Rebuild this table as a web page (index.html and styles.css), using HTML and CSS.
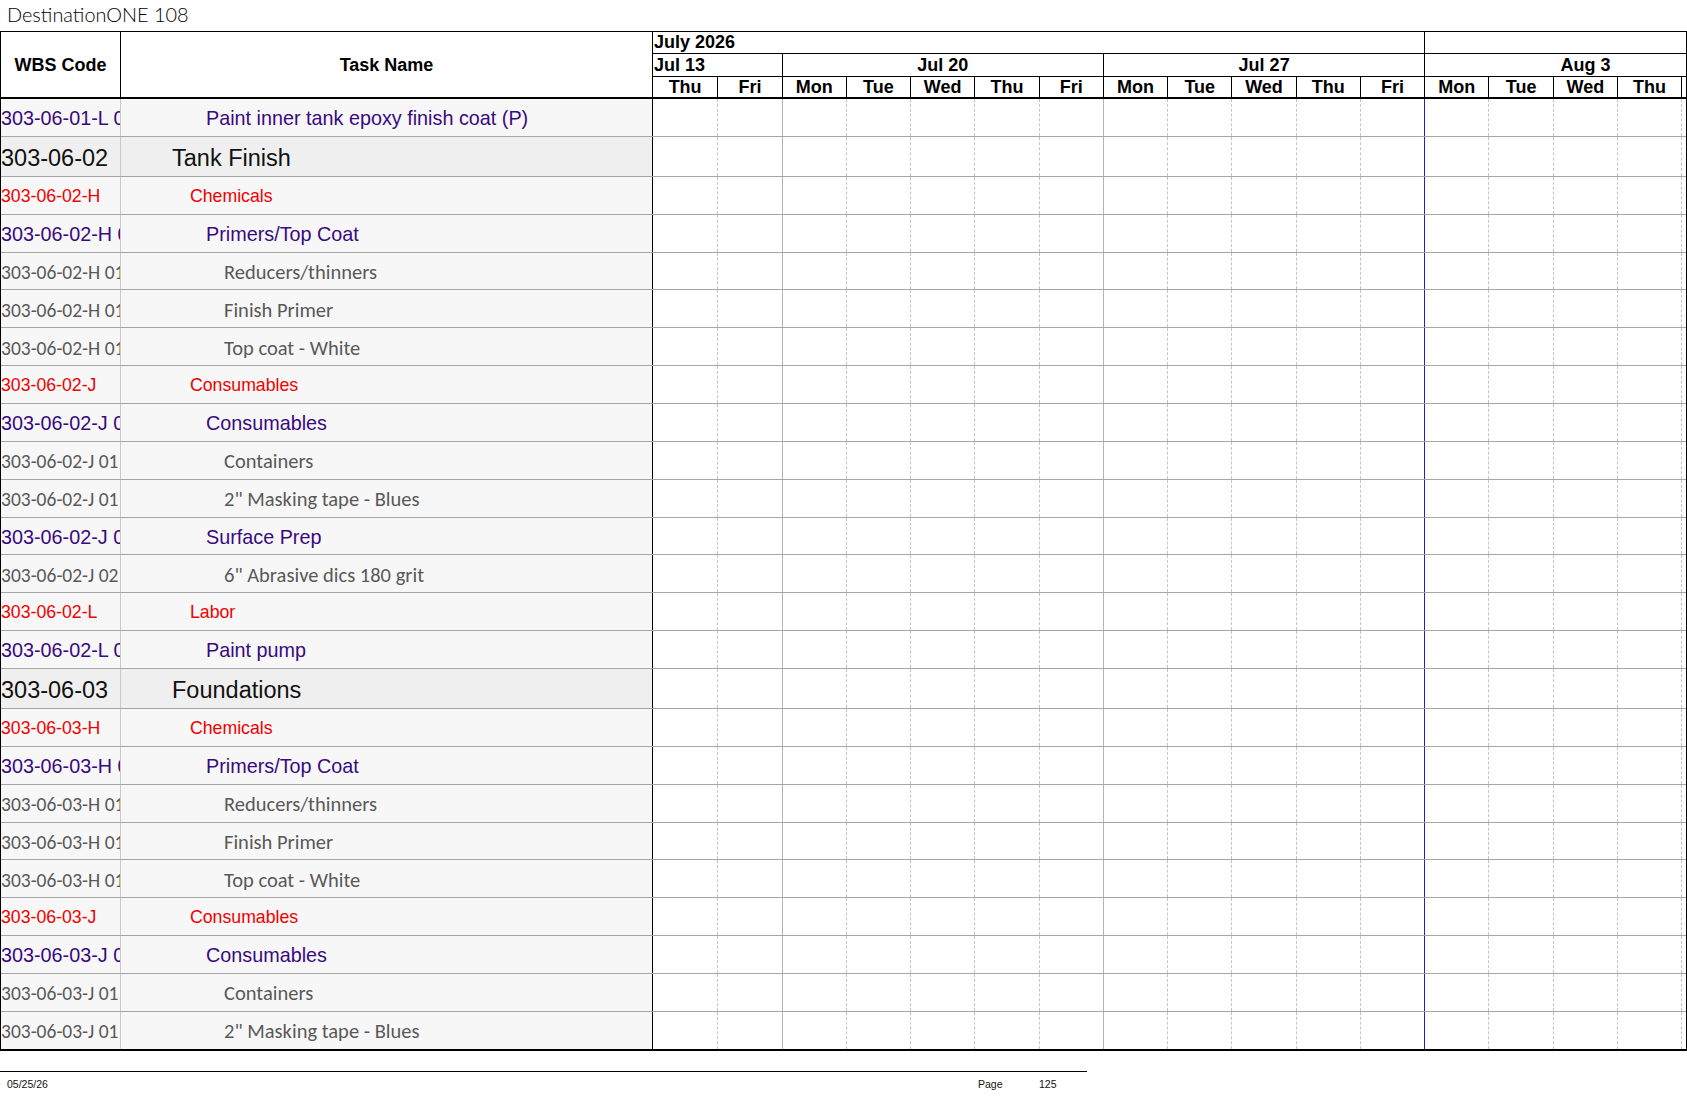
FILE: index.html
```html
<!DOCTYPE html>
<html>
<head>
<meta charset="utf-8">
<title>DestinationONE 108</title>
<link rel="stylesheet" href="styles.css">
</head>
<body>
<div class="title">DestinationONE 108</div>
<div class="sheet">
  <div class="head">
    <div class="h-wbs">WBS Code</div>
    <div class="h-task">Task Name</div>
    <div class="h-chart">
      <div class="mrow"><div class="m1">July 2026</div><div class="m2"></div></div>
      <div class="wrow"><div class="w2d left">Jul 13</div><div class="w5d">Jul 20</div><div class="w5d">Jul 27</div><div class="w5d">Aug 3</div></div>
      <div class="drow"><div>Thu</div><div>Fri</div><div>Mon</div><div>Tue</div><div>Wed</div><div>Thu</div><div>Fri</div><div>Mon</div><div>Tue</div><div>Wed</div><div>Thu</div><div>Fri</div><div>Mon</div><div>Tue</div><div>Wed</div><div>Thu</div><div>Fri</div></div>
    </div>
  </div>
  <div class="rows">
    <div class="row pur"><div class="wbs">303-06-01-L 01</div><div class="task">Paint inner tank epoxy finish coat (P)</div><div class="lane"><i></i><i></i><i></i><i></i><i></i><i></i><i></i><i></i><i></i><i></i><i></i><i></i><i></i><i></i><i></i><i></i><i></i></div></div>
    <div class="row sec"><div class="wbs">303-06-02</div><div class="task">Tank Finish</div><div class="lane"><i></i><i></i><i></i><i></i><i></i><i></i><i></i><i></i><i></i><i></i><i></i><i></i><i></i><i></i><i></i><i></i><i></i></div></div>
    <div class="row red"><div class="wbs">303-06-02-H</div><div class="task">Chemicals</div><div class="lane"><i></i><i></i><i></i><i></i><i></i><i></i><i></i><i></i><i></i><i></i><i></i><i></i><i></i><i></i><i></i><i></i><i></i></div></div>
    <div class="row pur"><div class="wbs">303-06-02-H 01</div><div class="task">Primers/Top Coat</div><div class="lane"><i></i><i></i><i></i><i></i><i></i><i></i><i></i><i></i><i></i><i></i><i></i><i></i><i></i><i></i><i></i><i></i><i></i></div></div>
    <div class="row gry"><div class="wbs">303-06-02-H 01 01</div><div class="task">Reducers/thinners</div><div class="lane"><i></i><i></i><i></i><i></i><i></i><i></i><i></i><i></i><i></i><i></i><i></i><i></i><i></i><i></i><i></i><i></i><i></i></div></div>
    <div class="row gry"><div class="wbs">303-06-02-H 01 02</div><div class="task">Finish Primer</div><div class="lane"><i></i><i></i><i></i><i></i><i></i><i></i><i></i><i></i><i></i><i></i><i></i><i></i><i></i><i></i><i></i><i></i><i></i></div></div>
    <div class="row gry"><div class="wbs">303-06-02-H 01 03</div><div class="task">Top coat - White</div><div class="lane"><i></i><i></i><i></i><i></i><i></i><i></i><i></i><i></i><i></i><i></i><i></i><i></i><i></i><i></i><i></i><i></i><i></i></div></div>
    <div class="row red"><div class="wbs">303-06-02-J</div><div class="task">Consumables</div><div class="lane"><i></i><i></i><i></i><i></i><i></i><i></i><i></i><i></i><i></i><i></i><i></i><i></i><i></i><i></i><i></i><i></i><i></i></div></div>
    <div class="row pur"><div class="wbs">303-06-02-J 01</div><div class="task">Consumables</div><div class="lane"><i></i><i></i><i></i><i></i><i></i><i></i><i></i><i></i><i></i><i></i><i></i><i></i><i></i><i></i><i></i><i></i><i></i></div></div>
    <div class="row gry"><div class="wbs">303-06-02-J 01 01</div><div class="task">Containers</div><div class="lane"><i></i><i></i><i></i><i></i><i></i><i></i><i></i><i></i><i></i><i></i><i></i><i></i><i></i><i></i><i></i><i></i><i></i></div></div>
    <div class="row gry"><div class="wbs">303-06-02-J 01 02</div><div class="task">2" Masking tape - Blues</div><div class="lane"><i></i><i></i><i></i><i></i><i></i><i></i><i></i><i></i><i></i><i></i><i></i><i></i><i></i><i></i><i></i><i></i><i></i></div></div>
    <div class="row pur"><div class="wbs">303-06-02-J 02</div><div class="task">Surface Prep</div><div class="lane"><i></i><i></i><i></i><i></i><i></i><i></i><i></i><i></i><i></i><i></i><i></i><i></i><i></i><i></i><i></i><i></i><i></i></div></div>
    <div class="row gry"><div class="wbs">303-06-02-J 02 01</div><div class="task">6" Abrasive dics 180 grit</div><div class="lane"><i></i><i></i><i></i><i></i><i></i><i></i><i></i><i></i><i></i><i></i><i></i><i></i><i></i><i></i><i></i><i></i><i></i></div></div>
    <div class="row red"><div class="wbs">303-06-02-L</div><div class="task">Labor</div><div class="lane"><i></i><i></i><i></i><i></i><i></i><i></i><i></i><i></i><i></i><i></i><i></i><i></i><i></i><i></i><i></i><i></i><i></i></div></div>
    <div class="row pur"><div class="wbs">303-06-02-L 01</div><div class="task">Paint pump</div><div class="lane"><i></i><i></i><i></i><i></i><i></i><i></i><i></i><i></i><i></i><i></i><i></i><i></i><i></i><i></i><i></i><i></i><i></i></div></div>
    <div class="row sec"><div class="wbs">303-06-03</div><div class="task">Foundations</div><div class="lane"><i></i><i></i><i></i><i></i><i></i><i></i><i></i><i></i><i></i><i></i><i></i><i></i><i></i><i></i><i></i><i></i><i></i></div></div>
    <div class="row red"><div class="wbs">303-06-03-H</div><div class="task">Chemicals</div><div class="lane"><i></i><i></i><i></i><i></i><i></i><i></i><i></i><i></i><i></i><i></i><i></i><i></i><i></i><i></i><i></i><i></i><i></i></div></div>
    <div class="row pur"><div class="wbs">303-06-03-H 01</div><div class="task">Primers/Top Coat</div><div class="lane"><i></i><i></i><i></i><i></i><i></i><i></i><i></i><i></i><i></i><i></i><i></i><i></i><i></i><i></i><i></i><i></i><i></i></div></div>
    <div class="row gry"><div class="wbs">303-06-03-H 01 01</div><div class="task">Reducers/thinners</div><div class="lane"><i></i><i></i><i></i><i></i><i></i><i></i><i></i><i></i><i></i><i></i><i></i><i></i><i></i><i></i><i></i><i></i><i></i></div></div>
    <div class="row gry"><div class="wbs">303-06-03-H 01 02</div><div class="task">Finish Primer</div><div class="lane"><i></i><i></i><i></i><i></i><i></i><i></i><i></i><i></i><i></i><i></i><i></i><i></i><i></i><i></i><i></i><i></i><i></i></div></div>
    <div class="row gry"><div class="wbs">303-06-03-H 01 03</div><div class="task">Top coat - White</div><div class="lane"><i></i><i></i><i></i><i></i><i></i><i></i><i></i><i></i><i></i><i></i><i></i><i></i><i></i><i></i><i></i><i></i><i></i></div></div>
    <div class="row red"><div class="wbs">303-06-03-J</div><div class="task">Consumables</div><div class="lane"><i></i><i></i><i></i><i></i><i></i><i></i><i></i><i></i><i></i><i></i><i></i><i></i><i></i><i></i><i></i><i></i><i></i></div></div>
    <div class="row pur"><div class="wbs">303-06-03-J 01</div><div class="task">Consumables</div><div class="lane"><i></i><i></i><i></i><i></i><i></i><i></i><i></i><i></i><i></i><i></i><i></i><i></i><i></i><i></i><i></i><i></i><i></i></div></div>
    <div class="row gry"><div class="wbs">303-06-03-J 01 01</div><div class="task">Containers</div><div class="lane"><i></i><i></i><i></i><i></i><i></i><i></i><i></i><i></i><i></i><i></i><i></i><i></i><i></i><i></i><i></i><i></i><i></i></div></div>
    <div class="row gry"><div class="wbs">303-06-03-J 01 02</div><div class="task">2" Masking tape - Blues</div><div class="lane"><i></i><i></i><i></i><i></i><i></i><i></i><i></i><i></i><i></i><i></i><i></i><i></i><i></i><i></i><i></i><i></i><i></i></div></div>
  </div>
</div>
<div class="foot">
  <span class="date">05/25/26</span>
  <span class="pg">Page</span>
  <span class="num">125</span>
</div>
</body>
</html>
```
FILE: styles.css
```css
* { box-sizing: border-box; }
html { overflow: hidden; }
body {
  margin: 0;
  background: #fff;
  color: #000;
  font-family: "Liberation Sans", Arial, sans-serif;
  --d: 64.28px;
}
.title {
  height: 31px;
  padding: 2px 0 0 7px;
  font-family: "Lato", "DejaVu Sans", sans-serif;
  font-weight: 300;
  font-size: 19.9px;
  line-height: 25px;
  color: #000;
}
.sheet {
  width: 1687px;
  border-left: 1px solid #000;
  border-right: 1px solid #000;
}
.head {
  display: flex;
  height: 68px;
  border-top: 1px solid #000;
  border-bottom: 2px solid #000;
  font-weight: bold;
  font-size: 18px;
}
.h-wbs, .h-task {
  display: flex;
  align-items: center;
  justify-content: center;
  border-right: 1px solid #000;
  padding-top: 1px;
}
.h-wbs { width: 120px; flex: none; }
.h-task { width: 532px; flex: none; }
.h-chart {
  flex: 1;
  min-width: 0;
  overflow: hidden;
  display: flex;
  flex-direction: column;
}
.mrow, .wrow, .drow { display: flex; line-height: 20px; }
.mrow { height: 22px; border-bottom: 1px solid #000; }
.wrow { height: 23px; border-bottom: 1px solid #000; }
.drow { flex: 1; }
.mrow > div, .wrow > div, .drow > div { flex: none; white-space: nowrap; }
.m1 { width: calc(var(--d) * 12); padding-left: 1px; }
.m2 { width: calc(var(--d) * 6); border-left: 1px solid #000; }
.wrow > div { text-align: center; padding-top: 1px; }
.w2d { width: calc(var(--d) * 2); }
.w2d.left { text-align: left; padding-left: 1px; }
.w5d { width: calc(var(--d) * 5); border-left: 1px solid #000; }
.drow > div { width: var(--d); text-align: center; border-left: 1px solid #000; }
.drow > div:first-child { border-left: none; }

.rows { border-bottom: 2px solid #000; }
.row {
  display: flex;
  height: 37.87px;
  border-bottom: 1px solid #a6a6a6;
}
.row:last-child { border-bottom: none; height: 36.9px; }
.row.sec { height: 40px; }
.wbs, .task {
  flex: none;
  display: flex;
  align-items: center;
  white-space: nowrap;
  overflow: hidden;
  background: #f7f7f7;
  padding-top: 2px;
}
.wbs { width: 120px; border-right: 1px solid #c8c8c8; }
.task { width: 532px; border-right: 1px solid #000; }
.sec .wbs, .sec .task { background: #efefef; padding-top: 4px; }
.lane {
  flex: 1;
  min-width: 0;
  display: flex;
  overflow: hidden;
  background: #fff;
}
.lane i {
  flex: none;
  width: var(--d);
  border-left: 1px dashed #c4c4c4;
}
.lane i:first-child { border-left: none; }
.lane i:nth-child(3), .lane i:nth-child(8) { border-left: 1px solid #b4b4b4; }
.lane i:nth-child(13) { border-left: 1px solid #2020c8; }

.sec { font-size: 23.5px; color: #111; }
.sec .task { padding-left: 51px; }
.red { color: #f00000; font-size: 17.7px; }
.red .task { padding-left: 69px; }
.pur { color: #3a0a80; font-size: 19.8px; }
.pur .task { padding-left: 85px; }
.gry {
  color: #595959;
  font-family: "Carlito", "Lato", sans-serif;
  font-size: 20.5px;
}
.gry .wbs { font-size: 19.5px; }
.gry .task { padding-left: 103px; }

.foot {
  width: 1087px;
  margin-top: 20px;
  border-top: 1px solid #000;
  display: flex;
  padding-top: 6px;
  font-family: "Liberation Sans Narrow", "Liberation Sans", sans-serif;
  font-size: 10.5px;
  line-height: 12px;
  color: #111;
}
.date { flex: 1; padding-left: 7px; }
.pg { width: 61px; }
.num { width: 48px; }
```
